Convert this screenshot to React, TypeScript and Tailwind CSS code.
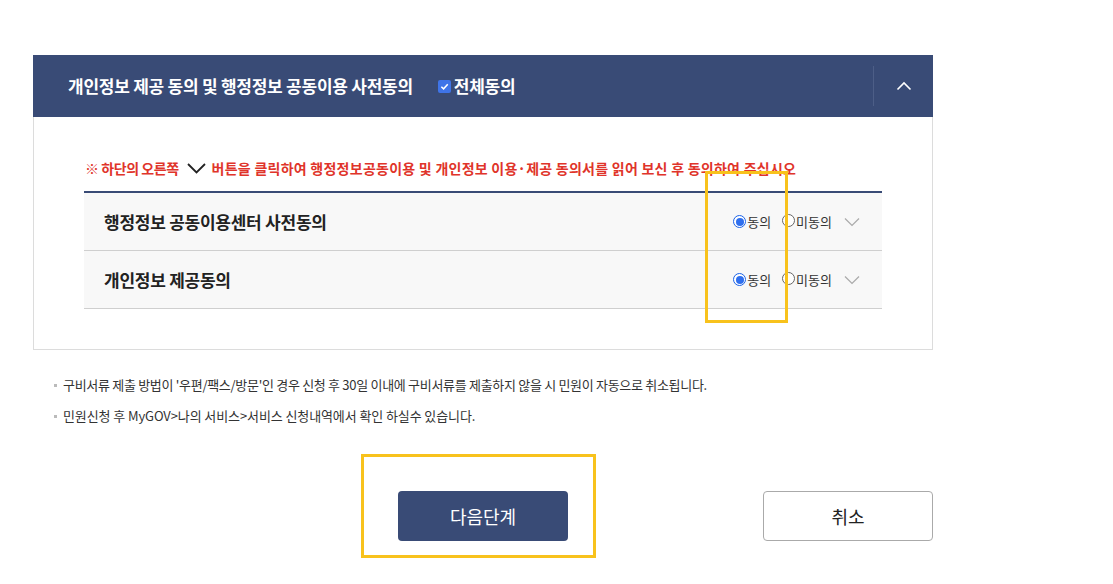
import React from "react";

const font = { fontFamily: '"Noto Sans CJK KR", "Noto Sans", sans-serif' };

function Radio({ checked }: { checked: boolean }) {
  return checked ? (
    <span className="inline-flex w-[13px] h-[13px] rounded-full border border-[#1a62e8] items-center justify-center bg-white">
      <span className="w-[8px] h-[8px] rounded-full bg-[#2f6fee]" />
    </span>
  ) : (
    <span className="inline-block w-[13px] h-[13px] rounded-full border border-[#666] bg-white" />
  );
}

function Row({ title }: { title: string }) {
  return (
    <div className="h-[58px] bg-[#f8f8f8] border-b border-[#cfcfcf] flex items-center pl-[20px] pr-[22px]">
      <div className="text-[17px] font-bold text-[#222] tracking-[-0.25px] leading-none">{title}</div>
      <div className="ml-auto flex items-center text-[13px] text-[#333]">
        <Radio checked />
        <span className="ml-[1px]">동의</span>
        <span className="ml-[11px]"><Radio checked={false} /></span>
        <span className="ml-[1px]">미동의</span>
        <svg className="ml-[12px]" width="16" height="10" viewBox="0 0 16 10">
          <path d="M1 1.5 L8 8.5 L15 1.5" fill="none" stroke="#aaa" strokeWidth="1.2" />
        </svg>
      </div>
    </div>
  );
}

export default function App() {
  return (
    <div className="relative w-[1113px] h-[584px] bg-white overflow-hidden" style={font}>
      <div className="pt-[55px] pl-[33px] w-[933px]">
        {/* header */}
        <div className="h-[62px] bg-[#394b76] flex items-center">
          <div className="pl-[35px] flex items-center text-white font-bold text-[17px] tracking-[-0.25px]">
            <span>개인정보 제공 동의 및 행정정보 공동이용 사전동의</span>
            <span className="ml-[25px] inline-flex w-[13px] h-[13px] rounded-[2px] bg-[#3f74e8] items-center justify-center">
              <svg width="9" height="9" viewBox="0 0 10 10">
                <path d="M1.5 5.2 L4 7.6 L8.6 2.5" fill="none" stroke="white" strokeWidth="1.7" />
              </svg>
            </span>
            <span className="ml-[3px]">전체동의</span>
          </div>
          <div className="ml-auto w-[60px] h-[40px] border-l border-[#4d5e87] flex items-center justify-center">
            <svg width="16" height="10" viewBox="0 0 16 10">
              <path d="M1.5 8.5 L8 2 L14.5 8.5" fill="none" stroke="white" strokeWidth="1.6" />
            </svg>
          </div>
        </div>
        {/* content box */}
        <div className="border-x border-b border-[#dcdcdc] pt-[41px] pb-[40px] px-[50px]">
          <div className="flex items-center h-[20px] text-[14px] font-bold text-[#e0342a] pl-[1px]">
            <span className="tracking-[-0.45px]">※ 하단의 오른쪽</span>
            <svg className="ml-[8px] mr-[6px]" width="19" height="11" viewBox="0 0 19 11">
              <path d="M1 1 L9.5 9.5 L18 1" fill="none" stroke="#222" strokeWidth="1.8" />
            </svg>
            <span className="tracking-[0.25px]">버튼을 클릭하여 행정정보공동이용 및 개인정보 이용·제공 동의서를 읽어 보신 후 동의하여 주십시오</span>
          </div>
          <div className="mt-[13px] border-t-2 border-[#394b76]">
            <Row title="행정정보 공동이용센터 사전동의" />
            <Row title="개인정보 제공동의" />
          </div>
        </div>
        {/* notes */}
        <div className="mt-[25px] pl-[21px] text-[13px] text-[#333]">
          <div className="flex items-center h-[20px] tracking-[-0.3px]">
            <span className="w-[3px] h-[3px] bg-[#bbb] mr-[6px]" />
            <span>구비서류 제출 방법이 '우편/팩스/방문'인 경우 신청 후 30일 이내에 구비서류를 제출하지 않을 시 민원이 자동으로 취소됩니다.</span>
          </div>
          <div className="flex items-center h-[20px] mt-[11px] tracking-[-0.1px]">
            <span className="w-[3px] h-[3px] bg-[#bbb] mr-[6px]" />
            <span>민원신청 후 MyGOV&gt;나의 서비스&gt;서비스 신청내역에서 확인 하실수 있습니다.</span>
          </div>
        </div>
        {/* buttons */}
        <div className="mt-[65px] flex pl-[365px]">
          <button className="w-[170px] h-[50px] rounded-[4px] bg-[#394b76] text-white text-[18px]">다음단계</button>
          <button className="ml-auto w-[170px] h-[50px] rounded-[4px] border border-[#aaa] bg-white text-[#222] text-[18px]">취소</button>
        </div>
      </div>
      {/* annotation highlight boxes */}
      <div className="absolute left-[705px] top-[171px] w-[83px] h-[152px] border-[3px] border-[#f8c21c]" />
      <div className="absolute left-[361px] top-[454px] w-[235px] h-[104px] border-[3px] border-[#f8c21c]" />
    </div>
  );
}
